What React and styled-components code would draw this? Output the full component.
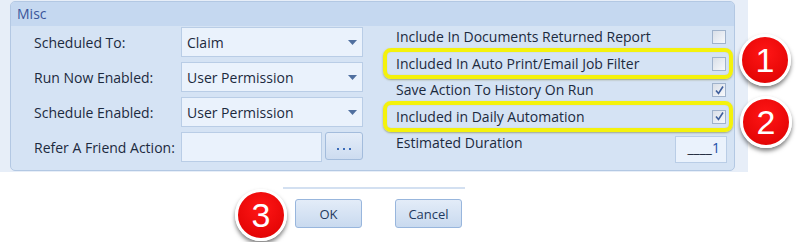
import styled, { createGlobalStyle } from "styled-components";

const GlobalStyle = createGlobalStyle`
  html, body {
    margin: 0;
    padding: 0;
    background: #ffffff;
  }
  body {
    font-family: "Open Sans", "Noto Sans", sans-serif;
    color: #1c2a3e;
  }
`;

const leftRows = [
  { label: "Scheduled To:", value: "Claim" },
  { label: "Run Now Enabled:", value: "User Permission" },
  { label: "Schedule Enabled:", value: "User Permission" },
];

const rightRows = [
  { label: "Include In Documents Returned Report", checked: false },
  { label: "Included In Auto Print/Email Job Filter", checked: false, mark: true },
  { label: "Save Action To History On Run", checked: true },
  { label: "Included in Daily Automation", checked: true, mark: true },
];

export default function App() {
  return (
    <>
      <GlobalStyle />
      <Page>
        <Dialog>
          <Panel>
            <PanelHeader>Misc</PanelHeader>
            <PanelBody>
              <LeftColumn>
                {leftRows.map((r) => (
                  <FieldRow key={r.label}>
                    <Label>{r.label}</Label>
                    <Combo>
                      <span>{r.value}</span>
                      <Arrow />
                    </Combo>
                  </FieldRow>
                ))}
                <FieldRow>
                  <Label>Refer A Friend Action:</Label>
                  <LookupWrap>
                    <TextBox />
                    <DotsButton>
                      <Dot />
                      <Dot />
                      <Dot />
                    </DotsButton>
                  </LookupWrap>
                </FieldRow>
              </LeftColumn>
              <RightColumn>
                {rightRows.map((r) => (
                  <CheckRow key={r.label} $mark={r.mark}>
                    <span>{r.label}</span>
                    <CheckBox>{r.checked && <CheckMark />}</CheckBox>
                  </CheckRow>
                ))}
                <CheckRow>
                  <span>Estimated Duration</span>
                  <Duration>
                    ____<b>1</b>
                  </Duration>
                </CheckRow>
              </RightColumn>
            </PanelBody>
          </Panel>
        </Dialog>
        <Footer>
          <ButtonBar>
            <Badge $left={-48} $top={0}>3</Badge>
            <DialogButton>OK</DialogButton>
            <DialogButton>Cancel</DialogButton>
          </ButtonBar>
        </Footer>
        <Badge $left={739} $top={34}>1</Badge>
        <Badge $left={740} $top={96}>2</Badge>
      </Page>
    </>
  );
}

function Arrow() {
  return (
    <svg width="9" height="5" viewBox="0 0 9 5">
      <path d="M0 0 H9 L4.5 5 Z" fill="#4f6f9f" />
    </svg>
  );
}

function CheckMark() {
  return (
    <svg width="11" height="11" viewBox="0 0 11 11">
      <path
        d="M2 5.5 L4.5 8.5 L9 1.5"
        fill="none"
        stroke="#3f5f9c"
        strokeWidth="1.6"
      />
    </svg>
  );
}

const Page = styled.div`
  position: relative;
  width: 805px;
  height: 242px;
  overflow: hidden;
`;

const Dialog = styled.div`
  width: 748px;
  height: 172px;
  box-sizing: border-box;
  padding: 1px 13px 0 10px;
  background: #e7eef8;
`;

const Panel = styled.div`
  height: 170px;
  box-sizing: border-box;
  border: 1px solid #b3c8e3;
  border-radius: 5px;
  background: #d5e3f4;
`;

const PanelHeader = styled.div`
  height: 24px;
  line-height: 24px;
  padding-left: 6px;
  border-radius: 4px 4px 0 0;
  background: #c5d8f0;
  color: #3a559a;
  font-size: 14px;
`;

const PanelBody = styled.div`
  display: flex;
  gap: 27px;
`;

const LeftColumn = styled.div`
  display: flex;
  flex-direction: column;
  gap: 5px;
  padding: 1px 0 0 23px;
`;

const FieldRow = styled.div`
  display: grid;
  grid-template-columns: 147px 182px;
  align-items: center;
  height: 30px;
`;

const Label = styled.div`
  font-size: 14px;
  color: #1c2a3e;
`;

const Combo = styled.div`
  display: flex;
  align-items: center;
  justify-content: space-between;
  height: 30px;
  box-sizing: border-box;
  padding: 0 5px 0 5px;
  border: 1px solid #b9cde6;
  background: #eaf2fc;
  font-size: 14px;
`;

const LookupWrap = styled.div`
  display: flex;
  gap: 3px;
  height: 30px;
`;

const TextBox = styled.div`
  width: 141px;
  box-sizing: border-box;
  border: 1px solid #b9cde6;
  background: #eaf2fc;
`;

const DotsButton = styled.div`
  flex: 1;
  height: 28px;
  box-sizing: border-box;
  display: flex;
  align-items: center;
  justify-content: center;
  gap: 4px;
  padding-top: 6px;
  border: 1px solid #a3bcdc;
  border-radius: 3px;
  background: linear-gradient(#e4edf9, #cddcf0);
`;

const Dot = styled.span`
  width: 2px;
  height: 2px;
  background: #3b6bb8;
`;

const RightColumn = styled.div`
  display: flex;
  flex-direction: column;
  gap: 4.5px;
  width: 339px;
  padding-top: 1px;
`;

const CheckRow = styled.div`
  position: relative;
  display: flex;
  align-items: flex-start;
  justify-content: space-between;
  height: 22px;
  padding: 0 3px 0 6px;
  font-size: 14px;
  line-height: 20px;
  color: #1c2a3e;

  &::after {
    content: "";
    display: ${(p) => (p.$mark ? "block" : "none")};
    position: absolute;
    inset: -6px -4px -3px -7px;
    border: 4px solid #f4f20c;
    border-radius: 8px;
    box-shadow: 0 1px 2px rgba(90, 90, 0, 0.45),
      inset 0 0 1px rgba(90, 90, 0, 0.35);
  }
`;

const CheckBox = styled.div`
  width: 14px;
  height: 14px;
  margin-top: 3px;
  box-sizing: border-box;
  display: flex;
  align-items: center;
  justify-content: center;
  border: 1px solid #9fb2cb;
  background: linear-gradient(135deg, #d9dfe8, #f7f9fc);
`;

const Duration = styled.div`
  width: 52px;
  height: 27px;
  margin-top: 3px;
  margin-right: -1px;
  box-sizing: border-box;
  border: 1px solid #b9cde6;
  background: #eaf2fc;
  text-align: right;
  padding-right: 6px;
  font-size: 14px;
  line-height: 22px;

  b {
    font-weight: normal;
    color: #1a4fa8;
  }
`;

const Footer = styled.div`
  display: flex;
  padding: 15px 0 0 283px;
`;

const ButtonBar = styled.div`
  position: relative;
  display: flex;
  gap: 33px;
  width: 182px;
  box-sizing: border-box;
  padding: 10px 0 0 12px;
  border-top: 2px solid #d3e0f1;
`;

const DialogButton = styled.div`
  width: 67px;
  height: 29px;
  box-sizing: border-box;
  display: flex;
  align-items: center;
  justify-content: center;
  border: 1px solid #98b6dd;
  border-radius: 3px;
  background: linear-gradient(#e3ecf8, #c9daef);
  color: #1f3a60;
  font-size: 13px;
`;

const Badge = styled.div`
  position: absolute;
  left: ${(p) => p.$left}px;
  top: ${(p) => p.$top}px;
  width: 52px;
  height: 52px;
  box-sizing: border-box;
  border: 3px solid #ffffff;
  border-radius: 50%;
  background: radial-gradient(circle at 50% 35%, #ff1616, #dc0000);
  box-shadow: 0 3px 4px rgba(0, 0, 0, 0.5);
  color: #ffffff;
  font-family: "Liberation Sans", Arial, sans-serif;
  font-size: 34px;
  line-height: 46px;
  text-align: center;
`;
